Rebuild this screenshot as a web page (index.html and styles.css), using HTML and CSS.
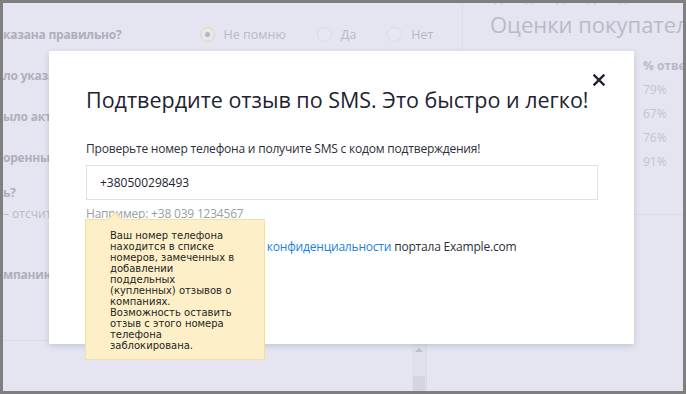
FILE: index.html
```html
<!DOCTYPE html>
<html lang="ru">
<head>
    <meta charset="UTF-8">
    <meta name="viewport" content="width=device-width, initial-scale=1.0">
    <title>Подтверждение отзыва</title>
    <link rel="stylesheet" href="styles.css">
</head>
<body>

    <div class="frame">
        <!-- Page behind the modal (dimmed) -->
        <div class="page">
            <div class="questions">
                <div class="q-row">
                    <span class="q-title">казана правильно?</span>
                    <div class="radios">
                        <label class="radio checked"><span class="dot"></span>Не помню</label>
                        <label class="radio"><span class="dot"></span>Да</label>
                        <label class="radio"><span class="dot"></span>Нет</label>
                    </div>
                </div>
                <div class="q-row"><span class="q-title">ло указано верно?</span></div>
                <div class="q-row"><span class="q-title">ыло актуальным?</span></div>
                <div class="q-row"><span class="q-title">оренные сроки?</span></div>
                <div class="q-row q-with-sub">
                    <span class="q-title">ь?</span>
                    <span class="q-sub">– отсчитывается</span>
                </div>
                <div class="q-row q-last"><span class="q-title">мпанию?</span></div>
                <div class="scroller">
                    <span class="scroll-up"></span>
                    <span class="scroll-thumb"></span>
                </div>
            </div>

            <div class="ratings">
                <div class="stars">★★★★★</div>
                <h2 class="ratings-title">Оценки покупателей</h2>
                <div class="answers">
                    <div class="answers-head">% ответов</div>
                    <div class="answer">79%</div>
                    <div class="answer">67%</div>
                    <div class="answer">76%</div>
                    <div class="answer">91%</div>
                </div>
                <div class="answers-line"></div>
            </div>
        </div>

        <!-- SMS confirm modal -->
        <div class="modal">
            <button class="close-btn" aria-label="Закрыть">
                <svg width="12" height="12" viewBox="0 0 12 12">
                    <path d="M1.5 1.5 L10.5 10.5 M10.5 1.5 L1.5 10.5" stroke="#1d2330" stroke-width="2.4" stroke-linecap="square"/>
                </svg>
            </button>
            <h1 class="modal-title">Подтвердите отзыв по SMS. Это быстро и легко!</h1>
            <p class="field-label">Проверьте номер телефона и получите SMS с кодом подтверждения!</p>
            <input class="phone-input" type="text" value="+380500298493">
            <div class="hint">Например: +38 039 1234567</div>
            <p class="policy">Я принимаю условия политики <a href="#">конфиденциальности</a> портала Example.com</p>

            <div class="tooltip">
                Ваш номер телефона находится в списке номеров, замеченных в добавлении поддельных (купленных) отзывов о компаниях. Возможность оставить отзыв с этого номера телефона заблокирована.
            </div>
        </div>
    </div>

</body>
</html>
```

FILE: styles.css
```css
* {
    box-sizing: border-box;
}

body {
    margin: 0;
    padding: 0;
    font-family: "Open Sans", "Noto Sans", sans-serif;
    background-color: #7f7f7f;
}

/* Grey screenshot frame */
.frame {
    width: 686px;
    height: 394px;
    border: 3px solid #7f7f7f;
    background-color: #e4e5f1;
    position: relative;
    overflow: hidden;
}

/* Dimmed page behind the modal */
.page {
    display: grid;
    grid-template-columns: 460px 1fr;
    align-items: start;
    height: 100%;
}

.questions {
    position: relative;
    height: 330px;
    border-right: 1px solid #dcdde9;
    padding-top: 17px;
}

.q-row {
    display: flex;
    align-items: center;
    height: 28px;
    margin-bottom: 13px;
}

.q-title {
    font-size: 12px;
    font-weight: 700;
    letter-spacing: -0.2px;
    color: #aeafbb;
    white-space: nowrap;
}

.q-with-sub {
    flex-direction: column;
    align-items: flex-start;
    height: auto;
    margin-top: 12px;
    margin-bottom: 38px;
}

.q-sub {
    font-size: 12px;
    color: #b9bac5;
    margin-top: 4px;
}

.q-last {
    margin-bottom: 0;
}

.radios {
    display: flex;
    gap: 31px;
    margin-left: 78px;
}

.radio {
    display: flex;
    align-items: center;
    gap: 9px;
    font-size: 12.5px;
    color: #b9bac5;
}

.radio .dot {
    width: 15px;
    height: 15px;
    border-radius: 50%;
    border: 1px solid #d9dae6;
    background-color: #e6e7f2;
    position: relative;
}

.radio.checked .dot {
    border-color: #e8d6a9;
}

.radio.checked .dot::after {
    content: "";
    position: absolute;
    left: 4px;
    top: 4px;
    width: 5px;
    height: 5px;
    border-radius: 50%;
    background-color: #b5b6c2;
}

/* Line under the questions block and fake scrollbar */
.questions::after {
    content: "";
    position: absolute;
    left: 0;
    right: 0;
    top: 337px;
    border-top: 1px solid #dadbe8;
}

.scroller {
    position: absolute;
    left: 409px;
    top: 338px;
    width: 15px;
    height: 60px;
    background-color: #dfe0ec;
    border-right: 1px solid #d9dae6;
}

.scroll-up {
    display: block;
    margin: 7px auto 0;
    width: 0;
    height: 0;
    border-left: 4px solid transparent;
    border-right: 4px solid transparent;
    border-bottom: 4px solid #bfc0cc;
}

.scroll-thumb {
    display: block;
    margin: 24px 1px 0;
    height: 20px;
    background-color: #d4d5e1;
}

/* Right column with ratings */
.ratings {
    padding-left: 27px;
    margin-top: -14px;
}

.stars {
    font-family: "DejaVu Sans", sans-serif;
    font-size: 18px;
    letter-spacing: 15px;
    color: #cfd0dc;
    height: 20px;
    line-height: 20px;
    white-space: nowrap;
}

.ratings-title {
    margin: 0;
    font-size: 22px;
    font-weight: 400;
    color: #b9bac6;
    white-space: nowrap;
    line-height: 30px;
}

.answers {
    margin-left: 153px;
    margin-top: 18px;
}

.answers-head {
    font-size: 12px;
    font-weight: 700;
    color: #b8b9c4;
    white-space: nowrap;
    margin-bottom: 7px;
}

.answer {
    font-size: 12px;
    color: #c3c4ce;
    height: 24px;
}

.answers-line {
    border-top: 1px solid #d9dae6;
    margin-top: 37px;
}

/* Modal */
.modal {
    position: absolute;
    left: 46px;
    top: 48px;
    width: 585px;
    height: 293px;
    background-color: #ffffff;
    box-shadow: 0 2px 6px rgba(60, 62, 90, 0.18);
    padding: 34px 37px 0 37px;
}

.close-btn {
    position: absolute;
    right: 29px;
    top: 23px;
    padding: 0;
    border: none;
    background: none;
    cursor: pointer;
    line-height: 0;
}

.modal-title {
    margin: 0;
    font-size: 21.5px;
    font-weight: 400;
    color: #1d2330;
    line-height: 30px;
    white-space: nowrap;
}

.field-label {
    margin: 25px 0 8px;
    font-size: 12px;
    letter-spacing: -0.2px;
    color: #2b2f3a;
    line-height: 17px;
}

.phone-input {
    display: block;
    width: 512px;
    height: 35px;
    border: 1px solid #dedff0;
    padding: 0 13px;
    font-family: "Open Sans", "Noto Sans", sans-serif;
    font-size: 12px;
    color: #1d2330;
    outline: none;
}

.hint {
    margin-top: 5px;
    font-size: 12px;
    letter-spacing: -0.2px;
    color: #9a9ca6;
    line-height: 17px;
}

.policy {
    margin: 16px 0 0;
    font-size: 12px;
    letter-spacing: -0.2px;
    color: #2b2f3a;
    line-height: 17px;
    white-space: nowrap;
}

.policy a {
    color: #1b7fe0;
    text-decoration: none;
}

/* Yellow warning tooltip */
.tooltip {
    position: absolute;
    left: 36px;
    top: 168px;
    width: 180px;
    padding: 10px 23px 8px 24px;
    background-color: #fdf0c9;
    border: 1px solid #f3df9f;
    font-family: "DejaVu Sans", Verdana, sans-serif;
    font-size: 10px;
    line-height: 11px;
    color: #1f1f1f;
}

.tooltip::before {
    content: "";
    position: absolute;
    left: 24px;
    top: -6px;
    width: 9px;
    height: 9px;
    background-color: #fdf0c9;
    border-left: 1px solid #f3df9f;
    border-top: 1px solid #f3df9f;
    transform: rotate(45deg);
}
```
